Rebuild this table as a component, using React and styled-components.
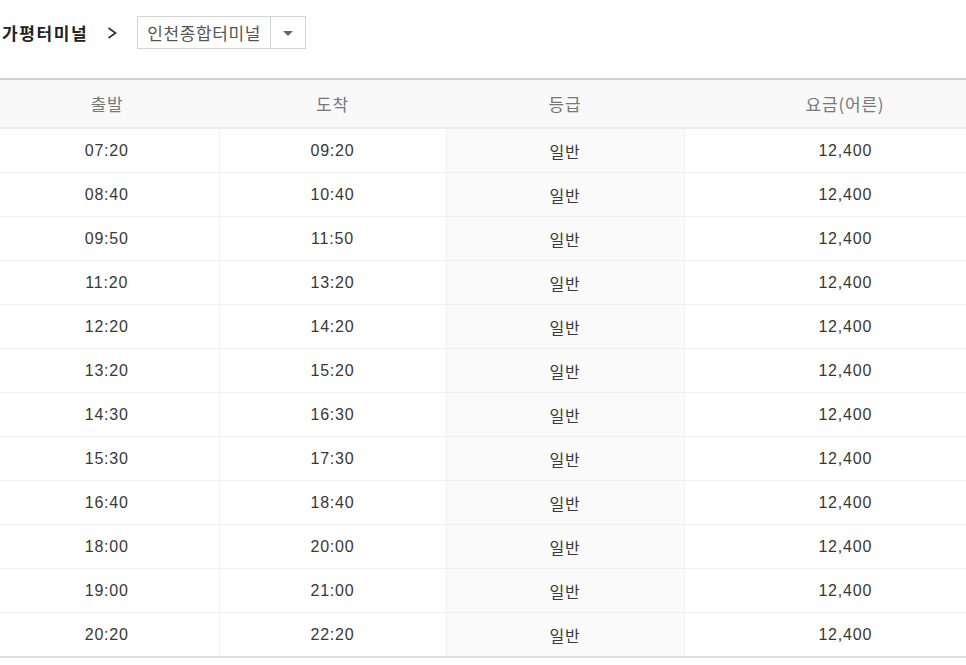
import React from "react";
import styled, { createGlobalStyle } from "styled-components";

const GlobalStyle = createGlobalStyle`
  html, body {
    margin: 0;
    padding: 0;
    background: #ffffff;
    overflow: hidden;
  }
  body {
    font-family: "Liberation Sans", "Noto Sans CJK KR", sans-serif;
    color: #333;
  }
`;

const schedule = [
  ["07:20", "09:20"],
  ["08:40", "10:40"],
  ["09:50", "11:50"],
  ["11:20", "13:20"],
  ["12:20", "14:20"],
  ["13:20", "15:20"],
  ["14:30", "16:30"],
  ["15:30", "17:30"],
  ["16:40", "18:40"],
  ["18:00", "20:00"],
  ["19:00", "21:00"],
  ["20:20", "22:20"],
];

export default function App() {
  return (
    <>
      <GlobalStyle />
      <Page>
        <RouteBar>
          <Origin>가평터미널</Origin>
          <Chevron viewBox="0 0 10 12" aria-hidden="true">
            <polyline points="1.5,1 8.5,6 1.5,11" />
          </Chevron>
          <Select>
            <SelectValue>인천종합터미널</SelectValue>
            <SelectButton>
              <Caret />
            </SelectButton>
          </Select>
        </RouteBar>

        <Table>
          <colgroup>
            <col style={{ width: 224 }} />
            <col style={{ width: 227 }} />
            <col style={{ width: 238 }} />
            <col />
          </colgroup>
          <thead>
            <tr>
              <Th>출발</Th>
              <Th>도착</Th>
              <Th>등급</Th>
              <Th>요금(어른)</Th>
            </tr>
          </thead>
          <tbody>
            {schedule.map(([dep, arr]) => (
              <Row key={dep}>
                <Td>{dep}</Td>
                <Td>{arr}</Td>
                <Td $shaded>일반</Td>
                <Td>12,400</Td>
              </Row>
            ))}
          </tbody>
        </Table>
      </Page>
    </>
  );
}

const Page = styled.div`
  width: 1011px;
  margin-left: -5px;
`;

const RouteBar = styled.div`
  display: flex;
  align-items: center;
  height: 33px;
  padding: 16px 0 0 7px;
  margin-bottom: 29px;
`;

const Origin = styled.h2`
  margin: 0;
  font-family: "Noto Sans CJK KR", sans-serif;
  font-size: 17px;
  font-weight: 700;
  color: #222;
  letter-spacing: 1.6px;
`;

const Chevron = styled.svg`
  width: 10px;
  height: 12px;
  margin: 0 20px 0 19px;
  fill: none;
  stroke: #333;
  stroke-width: 1.7;
`;

const Select = styled.div`
  display: flex;
  height: 31px;
  border: 1px solid #d5d5d5;
  background: #fff;
`;

const SelectValue = styled.span`
  display: flex;
  align-items: center;
  padding: 0 9px 0 9px;
  font-family: "Noto Sans CJK KR", sans-serif;
  font-size: 17px;
  color: #555;
  letter-spacing: 0.6px;
`;

const SelectButton = styled.span`
  display: flex;
  align-items: center;
  justify-content: center;
  width: 34px;
  border-left: 1px solid #d5d5d5;
`;

const Caret = styled.span`
  width: 0;
  height: 0;
  border-left: 5px solid transparent;
  border-right: 5px solid transparent;
  border-top: 5px solid #666;
  margin-top: 1px;
`;

const Table = styled.table`
  width: 100%;
  table-layout: fixed;
  border-collapse: collapse;
  border-top: 2px solid #d2d2d2;
  border-bottom: 2px solid #dcdcdc;
`;

const Th = styled.th`
  height: 47px;
  padding: 0;
  background: #f9f9f9;
  border-bottom: 2px solid #ededed;
  font-family: "Noto Sans CJK KR", sans-serif;
  font-size: 17px;
  font-weight: 400;
  color: #777;
  text-align: center;
  letter-spacing: 0.8px;
`;

const Row = styled.tr`
  &:not(:last-child) td {
    border-bottom: 1px solid #f0f0f0;
  }
`;

const Td = styled.td`
  height: 43px;
  padding: 0;
  text-align: center;
  font-family: "Liberation Sans", "Noto Sans CJK KR", sans-serif;
  font-size: 16px;
  color: #383838;
  letter-spacing: 0.8px;
  background: ${(p) => (p.$shaded ? "#fafafa" : "#ffffff")};
  & + & {
    border-left: 1px solid #f0f0f0;
  }
`;
